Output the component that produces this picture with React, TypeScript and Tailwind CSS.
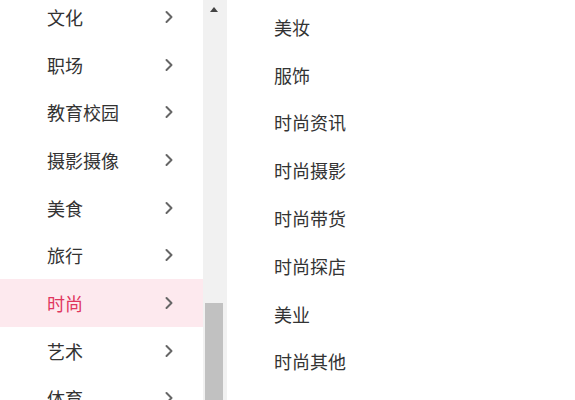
import { ChevronRight } from "lucide-react";

const left = ["文化", "职场", "教育校园", "摄影摄像", "美食", "旅行", "时尚", "艺术", "体育"];
const right = ["美妆", "服饰", "时尚资讯", "时尚摄影", "时尚带货", "时尚探店", "美业", "时尚其他"];

export default function App() {
  return (
    <div
      className="flex h-[400px] w-[575px] overflow-hidden bg-white text-[18px] text-[#333]"
      style={{ fontFamily: '"Noto Sans CJK SC", "Noto Sans", sans-serif' }}
    >
      <div className="-mt-[7px] flex w-[203px] shrink-0 flex-col">
        {left.map((name) => {
          const active = name === "时尚";
          return (
            <div
              key={name}
              className={`flex h-[47.7px] shrink-0 items-center justify-between pl-[47px] pr-[24px] ${
                active ? "bg-[#fde9ee] text-[#e0365e]" : ""
              }`}
            >
              <span className="leading-none">{name}</span>
              <ChevronRight className="h-[20px] w-[20px] text-[#666]" strokeWidth={2.4} />
            </div>
          );
        })}
      </div>

      <div className="relative w-[24px] shrink-0 bg-[#f1f1f1]">
        <div className="absolute left-[7px] top-[7px] h-0 w-0 border-x-[4px] border-b-[5px] border-x-transparent border-b-[#444]" />
        <div className="absolute left-[2px] top-[303px] h-[120px] w-[18px] bg-[#c1c1c1]" />
      </div>

      <div className="mt-[3px] flex flex-1 flex-col pl-[47px]">
        {right.map((name) => (
          <div key={name} className="flex h-[47.8px] shrink-0 items-center">
            <span className="leading-none">{name}</span>
          </div>
        ))}
      </div>
    </div>
  );
}
